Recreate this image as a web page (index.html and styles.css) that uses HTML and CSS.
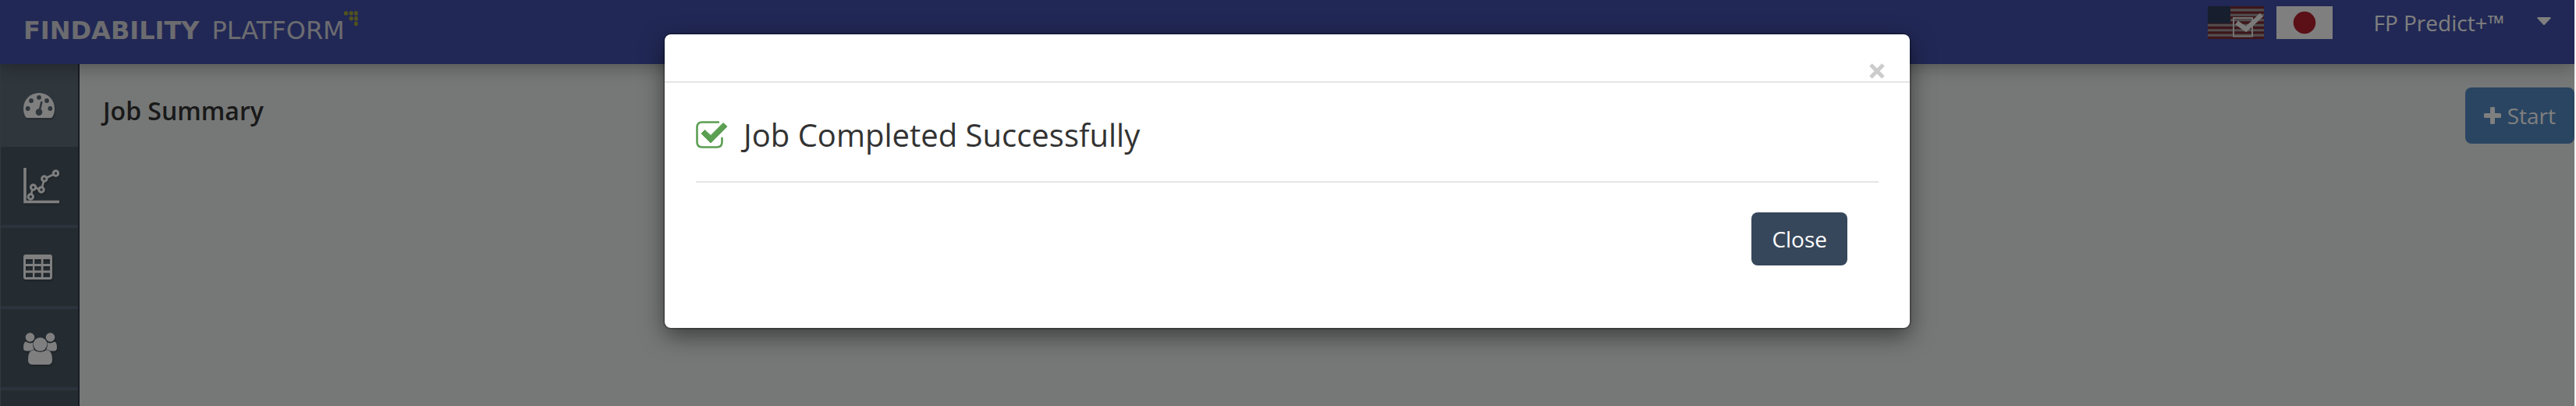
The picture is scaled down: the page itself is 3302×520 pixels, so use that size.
FILE: index.html
```
<!DOCTYPE html>
<html lang="en">
<head>
<meta charset="utf-8">
<title>Findability Platform</title>
<link rel="stylesheet" href="styles.css">
</head>
<body>
<div class="app">
  <header class="topbar">
    <a class="brand" href="#"><span class="brand-strong">FINDABILITY</span><span class="brand-light">PLATFORM</span><svg class="brand-dots" width="20" height="22" viewBox="0 0 20 22" aria-hidden="true"><g fill="#a3a43c"><circle cx="3.5" cy="4" r="2.7"/><circle cx="10.2" cy="4" r="2.7"/><rect x="14.2" y="1.300" width="4.400" height="5.400" rx="1"/><circle cx="10.2" cy="10.700" r="2.700"/><rect x="14.200" y="8" width="4.400" height="5.400" rx="1"/><rect x="14.200" y="14.700" width="4.400" height="5.400" rx="1"/></g></svg></a>
    <nav class="topnav">
      <button class="flag" type="button" aria-label="English">
        <svg width="72" height="42" viewBox="0 0 72 42"><rect width="72" height="42" fill="#a39d9f"/><path d="M0 1.600h72M0 8.100h72M0 14.500h72M0 21h72M0 27.500h72M0 33.900h72M0 40.400h72" stroke="#7c2c34" stroke-width="3.400"/><rect width="29" height="22" fill="#2c3c5a"/><path d="M2 4h26M4 8h24M2 12h26M4 16h24M2 20h26" stroke="#405070" stroke-width="1" stroke-dasharray="1 3"/><rect x="33" y="15" width="24" height="23.500" fill="none" stroke="#e4e4e4" stroke-width="2"/><path d="M37 21l12 8.500L69 11" fill="none" stroke="#f4f4f4" stroke-width="6"/></svg>
      </button>
      <button class="flag" type="button" aria-label="Japanese">
        <svg width="72" height="42" viewBox="0 0 72 42"><rect width="72" height="42" fill="#fff"/><circle cx="36" cy="21" r="14.300" fill="#b4202c"/></svg>
      </button>
      <button class="account" type="button"><span>FP Predict+™</span><svg width="18" height="10" viewBox="0 0 18 10" aria-hidden="true"><path d="M1 0h16l1 1-8 8.500q-1 1-2 0L0 1z" fill="#fff"/></svg></button>
    </nav>
  </header>
  <div class="shell">
    <nav class="sidebar">
      <a class="side-item active" href="#" aria-label="Dashboard"><svg width="40" height="32" viewBox="0 0 40 32"><path fill="#fff" fill-rule="evenodd" d="M20 0a20 20 0 0 1 20 20q0 6.500-3 11-.7 1-2 1H5q-1.300 0-2-1-3-4.500-3-11A20 20 0 0 1 20 0z"/><g class="cut"><circle cx="5.700" cy="20" r="2.900"/><circle cx="10" cy="10" r="2.900"/><circle cx="20" cy="5.800" r="2.900"/><circle cx="30" cy="10" r="2.900"/><circle cx="34.300" cy="20" r="2.900"/><circle cx="20" cy="24.600" r="4.300"/></g><path class="cut-line" d="M20.500 23.500L23.200 12"/></svg></a>
      <a class="side-item" href="#" aria-label="Analysis"><svg width="46" height="46" viewBox="0 0 46 46"><g fill="none" stroke="#fff"><path d="M2 0v43.500h44" stroke-width="3.600"/><path d="M9 37l3.500-12.500 10.500 3.500 4-14L41.500 7" stroke-width="2.600"/></g><g class="node" stroke="#fff" stroke-width="3"><circle cx="9.300" cy="37" r="3.200"/><circle cx="12.600" cy="25" r="3.200"/><circle cx="23" cy="28" r="3.200"/><circle cx="26.800" cy="14" r="3.200"/><circle cx="41.500" cy="7" r="3.200"/></g></svg></a>
      <a class="side-item" href="#" aria-label="Tables"><svg width="37" height="32" viewBox="0 0 37 32"><path fill="#fff" fill-rule="evenodd" d="M3 0h31q3 0 3 3v26q0 3-3 3H3q-3 0-3-3V3Q0 0 3 0zM3 6v6h9V6zM14.300 6v6h8.500V6zM25.500 6v6H34V6zM3 15v5.500h9V15zM14.300 15v5.500h8.500V15zM25.500 15v5.500H34V15zM3 23.500v5.500h9v-5.500zM14.300 23.500v5.500h8.500v-5.500zM25.500 23.500v5.500H34v-5.500z"/></svg></a>
      <a class="side-item" href="#" aria-label="Users"><svg width="43" height="41" viewBox="0 0 43 41"><g fill="#fff"><circle cx="8.500" cy="6" r="5.800"/><circle cx="34.500" cy="6" r="5.800"/><path d="M3 11.500q5.500 3.500 9.500 1-1 6 1.500 9-3 .2-5 2H4q-4 0-4-4 0-7 3-8z"/><path d="M40 11.500q-5.500 3.500-9.500 1 1 6-1.500 9 3 .2 5 2h5q4 0 4-4 0-7-3-8z"/><circle cx="21.500" cy="15" r="8.800"/><path d="M13 22q8.500 6 17 0 7 1 7 13 0 6-6 6H12q-6 0-6-6 0-12 7-13z"/></g></svg></a>
      <a class="side-item last" href="#" aria-label="More"></a>
    </nav>
    <main class="content">
      <h1 class="page-title">Job Summary</h1>
      <button class="start" type="button"><svg width="22" height="22" viewBox="0 0 22 22" aria-hidden="true"><path d="M9.500 0h3q1.500 0 1.500 1.500V8h6.500Q22 8 22 9.500v3q0 1.500-1.500 1.500H14v6.500q0 1.500-1.500 1.500h-3Q8 22 8 20.500V14H1.500Q0 14 0 12.500v-3Q0 8 1.500 8H8V1.500Q8 0 9.500 0z" fill="#fff"/></svg><span>Start</span></button>
    </main>
  </div>
  <div class="backdrop">
    <section class="modal" role="dialog" aria-modal="true" aria-labelledby="modal-title">
      <div class="modal-head">
        <button class="dismiss" type="button" aria-label="Dismiss"><svg width="20" height="20" viewBox="0 0 20 20"><path d="M2 2l16 16M18 2L2 18" stroke="#ccc" stroke-width="5"/></svg></button>
      </div>
      <div class="modal-body">
        <div class="message">
          <svg width="41" height="36" viewBox="0 0 41 36" aria-hidden="true"><path d="M30 1.500H8Q1.500 1.500 1.500 8v19q0 6.500 6.500 6.500h19q6.500 0 6.500-6.500v-6" fill="none" stroke="#5b9f52" stroke-width="2.600"/><path d="M7 16l4.500-4.500 7.500 7L35 2.500 40 7 19 28z" fill="#5b9f52" stroke="#5b9f52" stroke-linejoin="round"/></svg>
          <h2 class="message-title" id="modal-title">Job Completed Successfully</h2>
        </div>
        <div class="actions"><button class="close" type="button">Close</button></div>
      </div>
    </section>
  </div>
</div>
</body>
</html>
```
FILE: styles.css
```
* { box-sizing: border-box; }
body {
  margin: 0;
  background: #f4f4f4;
  color: #333;
  font-family: "Open Sans", "Noto Sans", sans-serif;
  font-size: 28px;
}
button { border: 0; padding: 0; background: none; color: inherit; font: inherit; }
svg { display: block; flex: none; }
.app {
  position: relative;
  display: flex;
  flex-direction: column;
  height: 100vh;
  margin-right: 2px;
  overflow: hidden;
}
.topbar {
  position: relative;
  z-index: 1;
  display: flex;
  flex: none;
  justify-content: space-between;
  height: 82px;
  padding: 0 30px 0 30px;
  background: #4250aa;
  color: #fff;
  box-shadow: 0 4px 20px rgba(0, 0, 0, .3);
}
.brand {
  position: relative;
  display: flex;
  gap: 16px;
  align-self: flex-start;
  padding: 20px 18px 0 0;
  color: #d8d8e0;
  font-family: "DejaVu Sans", sans-serif;
  font-size: 32px;
  line-height: 38px;
  text-decoration: none;
}
.brand-strong { font-weight: 700; }
.brand-dots { position: absolute; top: 13px; right: 0; }
.topnav { display: flex; align-items: flex-start; gap: 16px; padding-top: 8px; }
.account { display: flex; align-items: center; gap: 42px; margin-left: 36px; line-height: 42px; }
.account svg { margin-bottom: 4px; }
.shell { display: flex; flex: 1; min-height: 0; }
.sidebar {
  flex: none;
  width: 102px;
  border-right: 2px solid #303848;
  border-left: 1px solid #66747c;
  background: #4a5862;
}
.side-item {
  display: flex;
  align-items: center;
  height: 104px;
  padding-left: 29px;
  border-bottom: 4px solid #5a6678;
}
.side-item svg { filter: drop-shadow(1px 2px 1px rgba(0, 0, 0, .2)); }
.side-item.active { height: 106px; border: 0; background: #5e6c79; }
.side-item.last { border: 0; }
.cut { fill: #5e6c79; }
.cut-line { stroke: #5e6c79; stroke-width: 2.6; stroke-linecap: round; }
.node { fill: #4a5862; }
.content {
  display: flex;
  flex: 1;
  align-items: flex-start;
  justify-content: space-between;
  padding: 30px 0 0 30px;
  background: #ecf0ee;
}
.page-title { margin: 8px 0 0; font-size: 32px; font-weight: 600; line-height: 44px; }
.start {
  display: flex;
  align-items: center;
  gap: 8px;
  height: 72px;
  padding: 0 24px;
  border-radius: 8px;
  background: #548bc4;
  color: #fff;
}
.backdrop {
  position: absolute;
  inset: 0;
  z-index: 2;
  display: flex;
  align-items: flex-start;
  justify-content: center;
  padding-top: 44px;
  background: rgba(0, 0, 0, .5);
}
.modal {
  width: 1596px;
  max-width: 100%;
  border-radius: 8px;
  background: #fff;
  box-shadow: 0 0 0 2px rgba(0, 0, 0, .2), 0 10px 30px rgba(0, 0, 0, .5);
}
.modal-head {
  display: flex;
  align-items: flex-end;
  justify-content: flex-end;
  height: 62px;
  padding: 0 32px 3px;
  border-bottom: 2px solid #e5e5e5;
}
.modal-body { padding: 40px 40px 80px; }
.message {
  display: flex;
  align-items: center;
  gap: 20px;
  padding-bottom: 32px;
  border-bottom: 2px solid #e5e5e5;
}
.message-title { margin: 0; font-size: 40px; font-weight: 400; line-height: 54px; }
.actions { display: flex; justify-content: flex-end; padding: 38px 40px 0; }
.close {
  height: 68px;
  padding: 0 26px;
  border-radius: 8px;
  background: #37475b;
  color: #fff;
}
```
